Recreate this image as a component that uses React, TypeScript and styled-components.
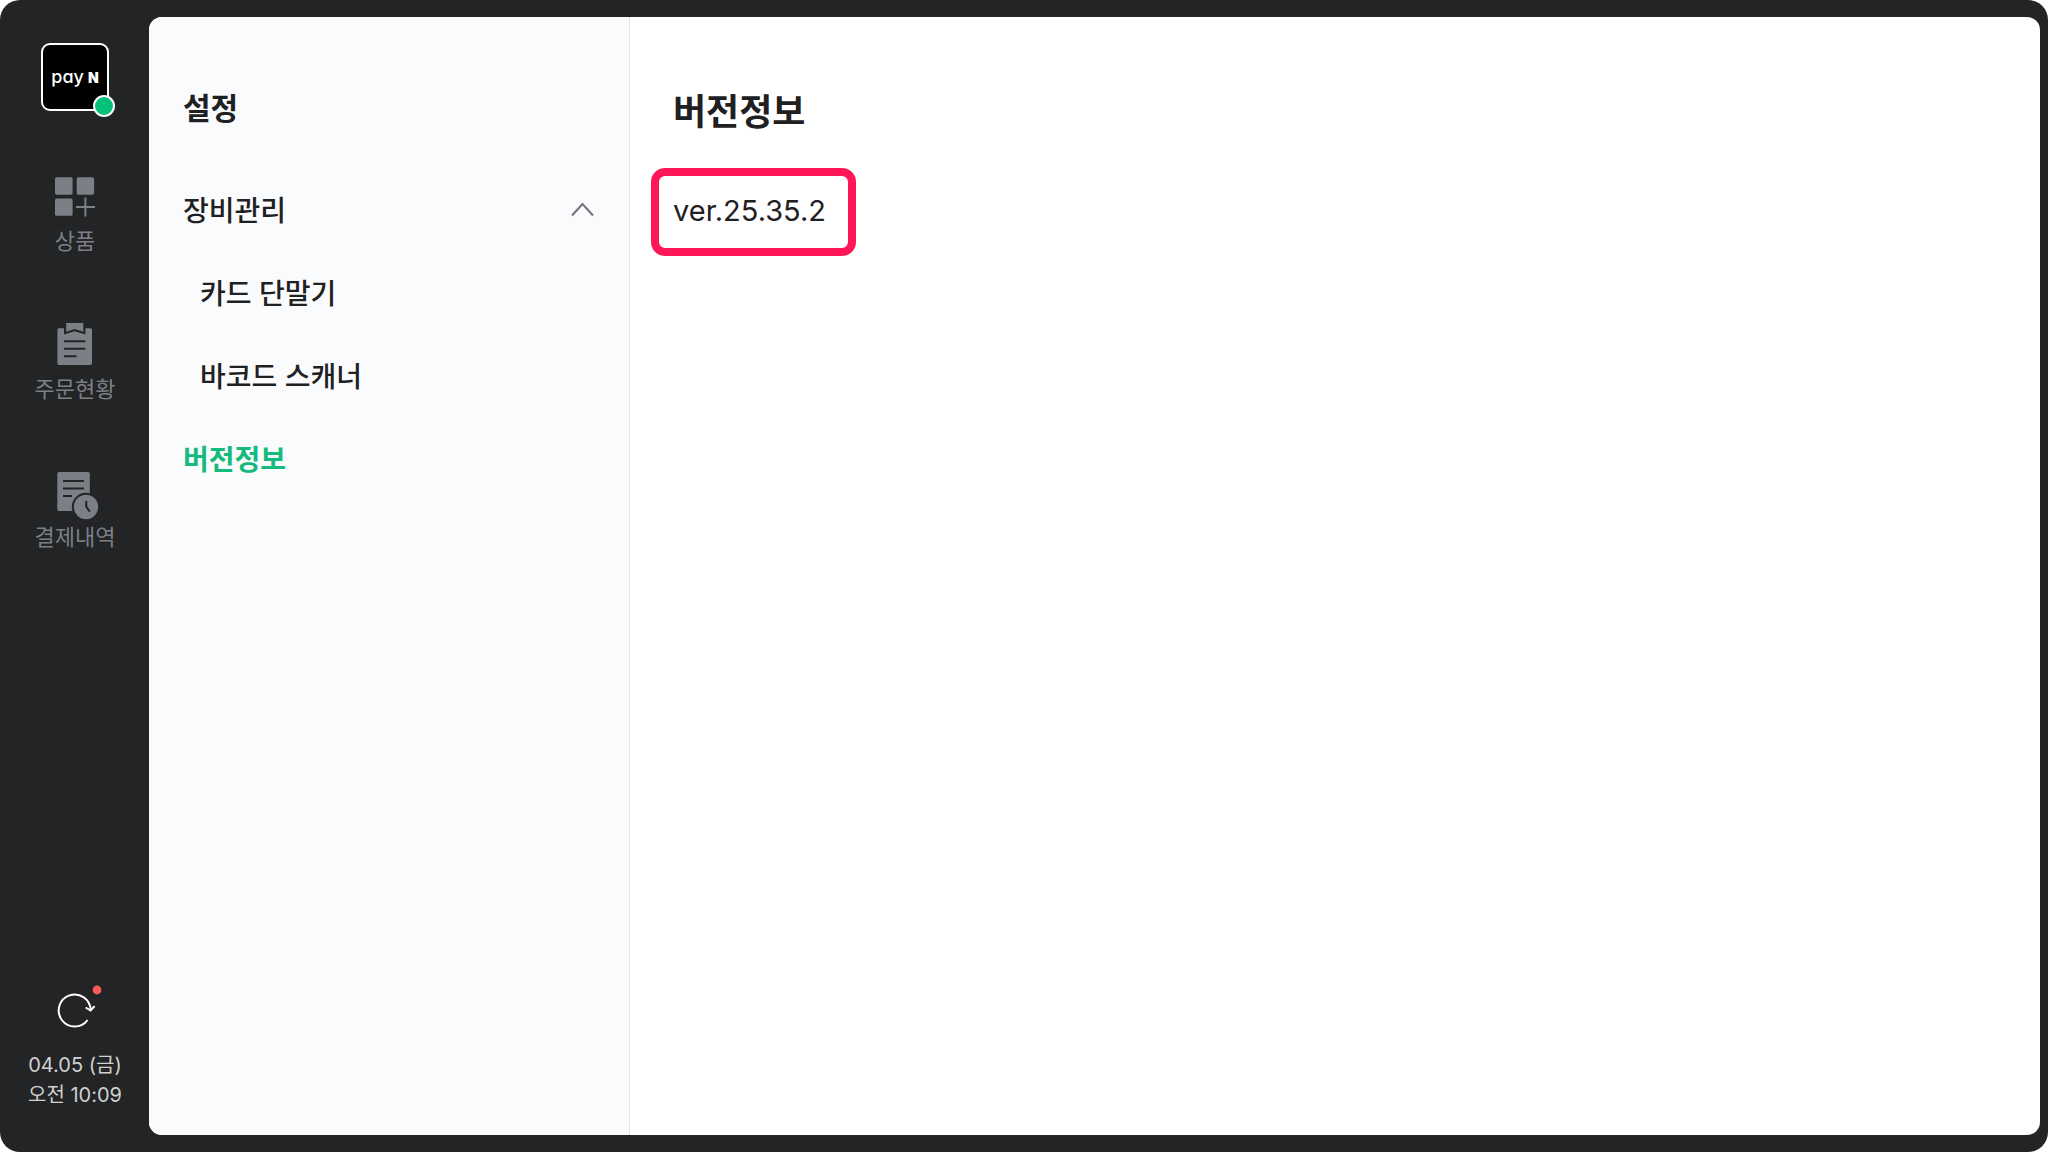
import React, { useState } from "react";
import styled, { createGlobalStyle } from "styled-components";

const GlobalStyle = createGlobalStyle`
  *, *::before, *::after { box-sizing: border-box; }
  body {
    margin: 0;
    background: #ffffff;
    color: #1f2022;
    font-family: Inter, "Noto Sans CJK KR", sans-serif;
  }
  h1, h2, p, ul { margin: 0; padding: 0; }
  ul { list-style: none; }
  a { color: inherit; text-decoration: none; }
  button { border: 0; padding: 0; background: none; color: inherit; font: inherit; cursor: pointer; }
  svg { display: block; overflow: visible; }
`;

const Shell = styled.div`
  display: flex;
  min-height: 100vh;
  padding: 17px 8px 17px 0;
  border-radius: 20px;
  background: #222426;
`;

const Rail = styled.aside`
  flex: none;
  display: flex;
  flex-direction: column;
  align-items: center;
  width: 149px;
  padding: 26px 0 25px 1px;
`;

const Logo = styled.button`
  position: relative;
  display: flex;
  align-items: baseline;
  justify-content: center;
  gap: 4px;
  width: 68px;
  height: 68px;
  border: 2px solid #ffffff;
  border-radius: 9px;
  background: #000000;
  color: #ffffff;
  line-height: 64px;
`;

const LogoWord = styled.span`
  font-size: 18px;
  font-weight: 500;
  font-feature-settings: "cv11";
`;

const LogoMark = styled.span`
  font-size: 14px;
  font-weight: 900;
`;

const StatusDot = styled.span`
  position: absolute;
  right: -8px;
  bottom: -8px;
  width: 22px;
  height: 22px;
  border: 2px solid #ffffff;
  border-radius: 50%;
  background: #04c078;
`;

const RailList = styled.ul`
  display: flex;
  flex-direction: column;
  gap: 67px;
  margin-top: 63px;
`;

const RailLink = styled.a`
  display: flex;
  flex-direction: column;
  align-items: center;
  gap: 5px;
  color: #7c7f86;
  font-size: 22px;
  line-height: 28px;
`;

const RailFooter = styled.div`
  display: flex;
  flex-direction: column;
  align-items: center;
  gap: 18px;
  margin-top: auto;
`;

const Clock = styled.p`
  color: #cfd0d1;
  font-size: 20px;
  line-height: 30px;
  text-align: center;
`;

const Sheet = styled.div`
  flex: 1;
  display: flex;
  min-width: 0;
  overflow: hidden;
  border-radius: 13px;
  background: #ffffff;
`;

const Menu = styled.nav`
  flex: none;
  width: 481px;
  padding: 71px 35px 0 34px;
  border-right: 1px solid #e3e5e9;
  background: #fafbfd;
`;

const MenuTitle = styled.h2`
  margin-bottom: 41px;
  font-size: 30px;
  font-weight: 700;
  line-height: 40px;
`;

const menuRow = `
  display: flex;
  align-items: center;
  justify-content: space-between;
  width: 100%;
  height: 83px;
  font-size: 28px;
  line-height: 40px;
`;

const GroupToggle = styled.button`
  ${menuRow}
  font-weight: 500;
`;

const MenuLink = styled.a<{ $nested?: boolean; $active?: boolean }>`
  ${menuRow}
  padding-left: ${(p) => (p.$nested ? 17 : 0)}px;
  color: ${(p) => (p.$active ? "#14bb7c" : "inherit")};
  font-weight: ${(p) => (p.$active ? 700 : 500)};
`;

const Content = styled.main`
  flex: 1;
  min-width: 0;
  padding: 71px 21px;
`;

const PageTitle = styled.h1`
  margin-left: 22px;
  font-size: 36px;
  font-weight: 700;
  line-height: 48px;
`;

const Version = styled.p`
  width: fit-content;
  margin-top: 32px;
  padding: 15px 22px 17px 14px;
  border: 8px solid #fe1657;
  border-radius: 14px;
  font-size: 29px;
  line-height: 40px;
`;

const GridIcon = () => (
  <svg width="48" height="48" viewBox="1 0 48 48" fill="currentColor" aria-hidden="true">
    <rect x="5" y="3.3" width="17.6" height="17.4" rx="1.6" />
    <rect x="26.7" y="3.3" width="17.4" height="17.4" rx="1.6" />
    <rect x="5" y="24.4" width="17.6" height="17.4" rx="1.6" />
    <path d="M26 33h19M35.4 23.5v19" stroke="currentColor" strokeWidth="2" />
  </svg>
);

const ClipboardIcon = () => (
  <svg width="48" height="48" viewBox="1 0 48 48" fill="currentColor" aria-hidden="true">
    <path d="M9 6.2h5v6.3l10.700-3.300 10.700 3.300V6.200h5q1.600 0 1.600 1.600v33.500q0 1.600-1.600 1.600H9q-1.600 0-1.600-1.600V7.800q0-1.600 1.600-1.600z" />
    <path d="M16.200 1h17.100v8.700l-8.500-2.700-8.600 2.700z" />
    <path d="M14 19.200h21.300M14 26.700h21.300M14 34.200h12.500" stroke="#222426" strokeWidth="2" />
  </svg>
);

const HistoryIcon = () => (
  <svg width="48" height="48" viewBox="1 0 48 48" fill="currentColor" aria-hidden="true">
    <rect x="7.3" y="2" width="32.500" height="39" rx="1.800" />
    <path d="M13 11h21M13 18.500h21M13 26h9" stroke="#222426" strokeWidth="2" />
    <circle cx="36" cy="37" r="13.200" stroke="#222426" strokeWidth="2" />
    <path d="M36.300 30.700v6l3.500 5" fill="none" stroke="#222426" strokeWidth="2" />
  </svg>
);

const RefreshIcon = () => (
  <svg width="48" height="48" viewBox="0 0 48 48" fill="none" aria-hidden="true">
    <path d="M36.600 36A16 16 0 1 1 39.700 26" stroke="#fff" strokeWidth="2" />
    <path d="M34.600 23.500l5 3 4-4.400" stroke="#fff" strokeWidth="2" />
    <circle cx="46" cy="6" r="4.400" fill="#fb5a56" />
  </svg>
);

const Chevron = ({ open }: { open: boolean }) => (
  <svg width="24" height="24" viewBox="0 0 24 24" fill="none" aria-hidden="true">
    <path d={open ? "M2 16.500 12.500 5 23 16.500" : "M2 6 12.500 17.500 23 6"} stroke="#737477" strokeWidth="2" />
  </svg>
);

const sections = [
  { label: "상품", Icon: GridIcon },
  { label: "주문현황", Icon: ClipboardIcon },
  { label: "결제내역", Icon: HistoryIcon },
];

const devices = ["카드 단말기", "바코드 스캐너"];

export default function App() {
  const [open, setOpen] = useState(true);

  return (
    <>
      <GlobalStyle />
      <Shell>
        <Rail>
          <Logo type="button">
            <LogoWord>pay</LogoWord>
            <LogoMark>N</LogoMark>
            <StatusDot />
          </Logo>
          <RailList>
            {sections.map(({ label, Icon }) => (
              <li key={label}>
                <RailLink href="#">
                  <Icon />
                  {label}
                </RailLink>
              </li>
            ))}
          </RailList>
          <RailFooter>
            <button type="button" aria-label="새로고침">
              <RefreshIcon />
            </button>
            <Clock>
              04.05 (금)
              <br />
              오전 10:09
            </Clock>
          </RailFooter>
        </Rail>
        <Sheet>
          <Menu>
            <MenuTitle>설정</MenuTitle>
            <GroupToggle type="button" aria-expanded={open} onClick={() => setOpen(!open)}>
              장비관리
              <Chevron open={open} />
            </GroupToggle>
            {open && (
              <ul>
                {devices.map((device) => (
                  <li key={device}>
                    <MenuLink href="#" $nested>
                      {device}
                    </MenuLink>
                  </li>
                ))}
              </ul>
            )}
            <MenuLink href="#" $active aria-current="page">
              버전정보
            </MenuLink>
          </Menu>
          <Content>
            <PageTitle>버전정보</PageTitle>
            <Version>ver.25.35.2</Version>
          </Content>
        </Sheet>
      </Shell>
    </>
  );
}
